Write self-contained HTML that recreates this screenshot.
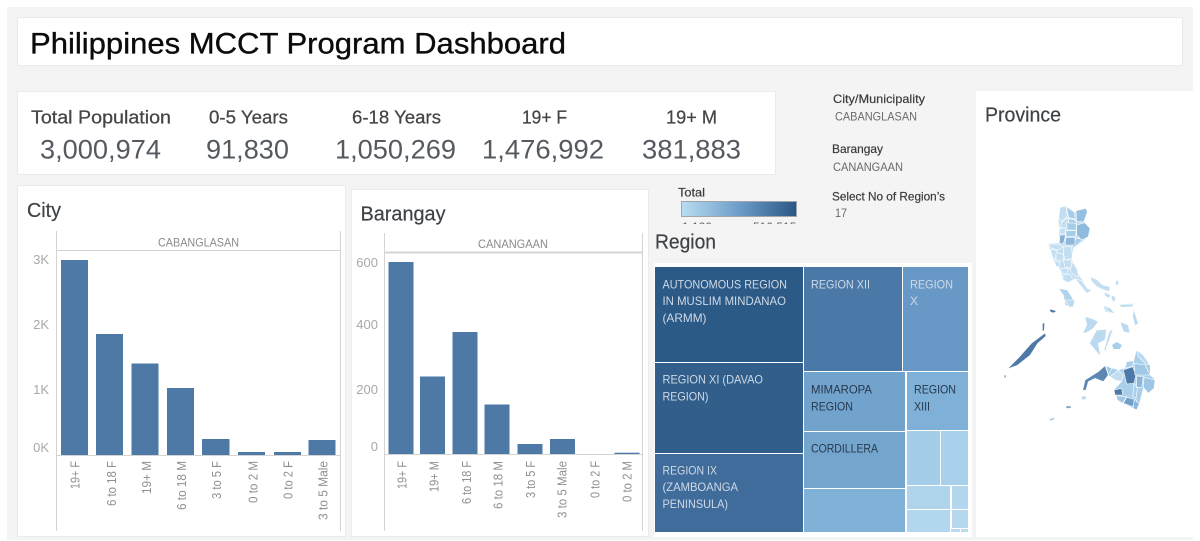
<!DOCTYPE html>
<html lang="en"><head><meta charset="utf-8"><title>Philippines MCCT Program Dashboard</title>
<style>
html,body{margin:0;padding:0;background:#fff;width:1200px;height:541px;overflow:hidden}
svg{display:block;filter:blur(.35px)}
text{font-family:"Liberation Sans",sans-serif}
.lb{font-size:18.5px;fill:#454545;stroke:#454545;stroke-width:.25px}
.nm{font-size:27px;fill:#555a60}
.tt{font-size:20px;fill:#3e4247;stroke:#3e4247;stroke-width:.2px}
.f{font-size:12px;fill:#3c3c3c;stroke:#3c3c3c;stroke-width:.2px}
.v{font-size:12px;fill:#6a6a6a}
.y{font-size:13px;fill:#a8a8a8;text-anchor:end}
.h{font-size:12px;fill:#8a8a8a}
.x{font-size:13px;fill:#8f8f8f;text-anchor:end}
.d{font-size:12px;fill:#ced9e5}
.k{font-size:12px;fill:#26384c}
</style></head><body>
<svg width="1200" height="541" viewBox="0 0 1200 541" xmlns="http://www.w3.org/2000/svg">
<defs>
<linearGradient id="g"><stop offset="0" stop-color="#b9ddf1"/><stop offset=".5" stop-color="#6c9dc8"/><stop offset="1" stop-color="#2a5783"/></linearGradient>
<clipPath id="lc"><rect x="670" y="218" width="140" height="6"/></clipPath>
</defs>
<rect width="1200" height="541" fill="#fff"/>
<rect x="7" y="7" width="1186" height="533" fill="#f4f4f4"/>
<rect x="17.500" y="17.500" width="1165" height="48" fill="#fff" stroke="#ebebeb"/>
<rect x="17.500" y="91.500" width="758" height="83" fill="#fff" stroke="#ebebeb"/>
<rect x="17.500" y="185.500" width="328" height="351" fill="#fff" stroke="#ebebeb"/>
<rect x="351.500" y="189.500" width="297" height="347" fill="#fff" stroke="#ebebeb"/>
<rect x="654" y="263" width="318" height="274" fill="#fff"/>
<rect x="976" y="91" width="218" height="446" fill="#fff"/>

<text x="30" y="53.500" font-size="30" fill="#0b0b0b" stroke="#0b0b0b" stroke-width=".35" textLength="536" lengthAdjust="spacingAndGlyphs">Philippines MCCT Program Dashboard</text>

<text class="lb" x="31" y="123.500" textLength="140" lengthAdjust="spacingAndGlyphs">Total Population</text>
<text class="lb" x="209" y="123.500" textLength="79" lengthAdjust="spacingAndGlyphs">0-5 Years</text>
<text class="lb" x="352" y="123.500" textLength="89" lengthAdjust="spacingAndGlyphs">6-18 Years</text>
<text class="lb" x="522" y="123.500" textLength="45" lengthAdjust="spacingAndGlyphs">19+ F</text>
<text class="lb" x="666" y="123.500" textLength="51" lengthAdjust="spacingAndGlyphs">19+ M</text>
<text class="nm" x="40" y="158.500" textLength="121" lengthAdjust="spacingAndGlyphs">3,000,974</text>
<text class="nm" x="206" y="158.500" textLength="83" lengthAdjust="spacingAndGlyphs">91,830</text>
<text class="nm" x="335" y="158.500" textLength="121" lengthAdjust="spacingAndGlyphs">1,050,269</text>
<text class="nm" x="482" y="158.500" textLength="122" lengthAdjust="spacingAndGlyphs">1,476,992</text>
<text class="nm" x="642" y="158.500" textLength="99" lengthAdjust="spacingAndGlyphs">381,883</text>

<text class="f" x="833" y="103" textLength="92" lengthAdjust="spacingAndGlyphs">City/Municipality</text>
<text class="v" x="835" y="120.500" textLength="82" lengthAdjust="spacingAndGlyphs">CABANGLASAN</text>
<text class="f" x="832" y="153" textLength="51" lengthAdjust="spacingAndGlyphs">Barangay</text>
<text class="v" x="833" y="171" textLength="70" lengthAdjust="spacingAndGlyphs">CANANGAAN</text>
<text class="f" x="832" y="200.500" textLength="113" lengthAdjust="spacingAndGlyphs">Select No of Region’s</text>
<text class="v" x="835" y="217" textLength="12" lengthAdjust="spacingAndGlyphs">17</text>

<text class="f" x="678" y="196.500" textLength="27" lengthAdjust="spacingAndGlyphs">Total</text>
<rect x="681.500" y="201.500" width="115" height="15" fill="url(#g)" stroke="#a0a6ab"/>
<g clip-path="url(#lc)"><text x="682" y="231" font-size="12" fill="#666">1,129</text><text x="753" y="231" font-size="12" fill="#666">510,515</text></g>

<!-- City chart -->
<text class="tt" x="27" y="217" textLength="34" lengthAdjust="spacingAndGlyphs">City</text>
<g stroke="#d4d4d4" fill="none"><path d="M56.500 231V531M340.500 231V531M57 250.500H340M57 455.500H340"/></g>
<text class="h" x="158" y="246.500" textLength="81" lengthAdjust="spacingAndGlyphs">CABANGLASAN</text>
<text class="y" x="49" y="264">3K</text><text class="y" x="49" y="329">2K</text><text class="y" x="49" y="394">1K</text><text class="y" x="49" y="452">0K</text>
<g fill="#4e79a7">
<rect x="61" y="260" width="27" height="195"/><rect x="96" y="334" width="27" height="121"/><rect x="131.500" y="363.500" width="27" height="91.500"/><rect x="167" y="388" width="27" height="67"/><rect x="202" y="439" width="27.500" height="16"/><rect x="238" y="452" width="27" height="3"/><rect x="274" y="452" width="27" height="3"/><rect x="308.500" y="440" width="27" height="15"/>
</g>
<text class="x" transform="translate(79.500,461) rotate(-90)" textLength="28" lengthAdjust="spacingAndGlyphs">19+ F</text>
<text class="x" transform="translate(116,461) rotate(-90)" textLength="45" lengthAdjust="spacingAndGlyphs">6 to 18 F</text>
<text class="x" transform="translate(151,461) rotate(-90)" textLength="33" lengthAdjust="spacingAndGlyphs">19+ M</text>
<text class="x" transform="translate(186,461) rotate(-90)" textLength="49" lengthAdjust="spacingAndGlyphs">6 to 18 M</text>
<text class="x" transform="translate(221,461) rotate(-90)" textLength="38" lengthAdjust="spacingAndGlyphs">3 to 5 F</text>
<text class="x" transform="translate(257.500,461) rotate(-90)" textLength="42" lengthAdjust="spacingAndGlyphs">0 to 2 M</text>
<text class="x" transform="translate(292.500,461) rotate(-90)" textLength="38" lengthAdjust="spacingAndGlyphs">0 to 2 F</text>
<text class="x" transform="translate(327.500,461) rotate(-90)" textLength="59" lengthAdjust="spacingAndGlyphs">3 to 5 Male</text>

<!-- Barangay chart -->
<text class="tt" x="360.500" y="220.500" textLength="85" lengthAdjust="spacingAndGlyphs">Barangay</text>
<g stroke="#d4d4d4" fill="none"><path d="M384.500 233V531M642.500 233V531M385 454.500H642"/><path d="M385 252.500H642" stroke-width="2"/></g>
<text class="h" x="478" y="248" textLength="70" lengthAdjust="spacingAndGlyphs">CANANGAAN</text>
<text class="y" x="378" y="267">600</text><text class="y" x="378" y="329">400</text><text class="y" x="378" y="394">200</text><text class="y" x="378" y="451">0</text>
<g fill="#4e79a7">
<rect x="388.500" y="262" width="25" height="192"/><rect x="420" y="376.500" width="25" height="77.500"/><rect x="452.500" y="332" width="25" height="122"/><rect x="484.500" y="404.500" width="25" height="49.500"/><rect x="517.500" y="444" width="25" height="10"/><rect x="550" y="439" width="25" height="15"/><rect x="614.500" y="452.700" width="25" height="1.300"/>
</g>
<text class="x" transform="translate(406.500,461) rotate(-90)" textLength="28" lengthAdjust="spacingAndGlyphs">19+ F</text>
<text class="x" transform="translate(438.500,461) rotate(-90)" textLength="31" lengthAdjust="spacingAndGlyphs">19+ M</text>
<text class="x" transform="translate(471,461) rotate(-90)" textLength="43" lengthAdjust="spacingAndGlyphs">6 to 18 F</text>
<text class="x" transform="translate(502.500,461) rotate(-90)" textLength="48" lengthAdjust="spacingAndGlyphs">6 to 18 M</text>
<text class="x" transform="translate(535,461) rotate(-90)" textLength="37" lengthAdjust="spacingAndGlyphs">3 to 5 F</text>
<text class="x" transform="translate(566.500,461) rotate(-90)" textLength="57" lengthAdjust="spacingAndGlyphs">3 to 5 Male</text>
<text class="x" transform="translate(599.500,461) rotate(-90)" textLength="37" lengthAdjust="spacingAndGlyphs">0 to 2 F</text>
<text class="x" transform="translate(631.500,461) rotate(-90)" textLength="41" lengthAdjust="spacingAndGlyphs">0 to 2 M</text>

<!-- Region treemap -->
<text class="tt" x="655" y="248.500" textLength="61" lengthAdjust="spacingAndGlyphs">Region</text>
<rect x="655" y="267" width="148" height="95" fill="#2c5a87"/>
<rect x="655" y="363" width="148" height="90" fill="#315e8b"/>
<rect x="655" y="454" width="148" height="78" fill="#3f6c9b"/>
<rect x="804" y="267" width="98" height="104" fill="#4a79a8"/>
<rect x="903" y="267" width="65" height="104" fill="#6898c5"/>
<rect x="804" y="372" width="101" height="59" fill="#72a3cd"/>
<rect x="907" y="372" width="61" height="58" fill="#7fb0d8"/>
<rect x="804" y="432" width="101" height="56" fill="#74a5cc"/>
<rect x="804" y="489" width="101" height="43" fill="#80b1d7"/>
<rect x="907" y="431" width="33" height="54" fill="#a3cde9"/>
<rect x="941" y="431" width="27" height="54" fill="#a8d0eb"/>
<rect x="907" y="486" width="43" height="23" fill="#afd4ec"/>
<rect x="952" y="486" width="16" height="23" fill="#b3d7ee"/>
<rect x="907" y="510" width="43" height="22" fill="#b3d7ee"/>
<rect x="952" y="510" width="16" height="18" fill="#b5d8ef"/>
<rect x="951" y="529" width="9" height="3" fill="#b9dbf0"/>
<rect x="961" y="529" width="7" height="3" fill="#b9dbf0"/>
<text class="d" x="662.500" y="288.500" textLength="124.500" lengthAdjust="spacingAndGlyphs">AUTONOMOUS REGION</text>
<text class="d" x="662.500" y="305" textLength="123.500" lengthAdjust="spacingAndGlyphs">IN MUSLIM MINDANAO</text>
<text class="d" x="662.500" y="322" textLength="44" lengthAdjust="spacingAndGlyphs">(ARMM)</text>
<text class="d" x="662.500" y="383.500" textLength="100.500" lengthAdjust="spacingAndGlyphs">REGION XI (DAVAO</text>
<text class="d" x="662.500" y="400.500" textLength="46" lengthAdjust="spacingAndGlyphs">REGION)</text>
<text class="d" x="662.500" y="474.500" textLength="54.500" lengthAdjust="spacingAndGlyphs">REGION IX</text>
<text class="d" x="662.500" y="491" textLength="75.500" lengthAdjust="spacingAndGlyphs">(ZAMBOANGA</text>
<text class="d" x="662.500" y="508" textLength="65.500" lengthAdjust="spacingAndGlyphs">PENINSULA)</text>
<text class="d" x="811" y="288.500" textLength="59" lengthAdjust="spacingAndGlyphs">REGION XII</text>
<text class="d" x="910" y="288.500" textLength="43" lengthAdjust="spacingAndGlyphs">REGION</text>
<text class="d" x="910" y="305" textLength="8" lengthAdjust="spacingAndGlyphs">X</text>
<text class="k" x="811" y="393.500" textLength="61" lengthAdjust="spacingAndGlyphs">MIMAROPA</text>
<text class="k" x="811" y="410.500" textLength="42" lengthAdjust="spacingAndGlyphs">REGION</text>
<text class="k" x="914" y="393.500" textLength="42" lengthAdjust="spacingAndGlyphs">REGION</text>
<text class="k" x="914" y="410.500" textLength="16" lengthAdjust="spacingAndGlyphs">XIII</text>
<text class="k" x="811" y="452.500" textLength="67" lengthAdjust="spacingAndGlyphs">CORDILLERA</text>

<!-- Province map -->
<text class="tt" x="985" y="121.500" textLength="76" lengthAdjust="spacingAndGlyphs">Province</text>
<g transform="translate(980,180) scale(.33333)" stroke="#fff" stroke-width="1.800" stroke-linejoin="round">
<path fill="#c3def1" stroke="none" d="M240 82L258 78 285 97 318 85 322 95 312 125 330 145 325 170 300 190 280 205 275 235 282 262 300 290 322 325 335 332 320 340 300 315 285 296 262 308 248 298 245 280 237 262 228 258 215 225 205 190 238 190 236 115Z"/>
<g fill="#c3def1">
<path d="M240 82L258 78 262 108 245 125 236 115Z"/>
<path d="M245 128L262 112 266 128 256 145 238 142Z"/>
<path d="M238 145H256L255 162 240 162Z"/>
<path d="M205 190L240 195 250 200 235 210 215 205Z"/>
<path d="M212 208L232 212 225 240 215 225Z"/>
<path d="M228 218L250 222 250 240 228 240Z"/>
<path d="M222 243L240 245 237 262 228 258Z"/>
<path d="M252 198L275 200 277 235 255 240 250 220Z"/>
<path d="M250 240H275L275 265 255 262Z"/>
<path d="M242 265L265 265 262 282 245 280Z"/>
<path d="M278 245L292 268 296 292 280 285 270 270Z"/>
<path d="M250 285L270 282 280 300 262 308 248 298Z"/>
<path d="M285 296L305 302 322 325 335 332 320 340 300 315Z"/>
<path d="M330 290L350 298 368 315 390 320 388 335 372 330 350 320 335 305Z"/>
<path d="M372 335L392 345 388 355 375 348Z"/>
<path d="M408 300L418 305 412 318 406 312Z"/>
<path d="M395 345L408 352 402 368 394 358Z"/>
<path d="M420 372L460 370 458 380 425 382Z"/>
<path d="M370 378L392 385 395 400 375 395Z"/>
</g>
<g fill="#a5cce8">
<path d="M260 80L284 97 285 118 265 112Z"/>
<path d="M267 115L288 122 288 132 266 128Z"/>
<path d="M260 128L288 130 290 150 262 150Z"/>
<path d="M258 152H290L285 170 258 170Z"/>
<path d="M288 175L310 178 280 205 278 195Z"/>
<path d="M235 325L262 330 280 358 276 382 256 376 250 345Z" fill="#b0d3ec"/>
</g>
<path fill="#93bfe0" d="M288 92L318 85 322 95 312 125 290 125Z"/>
<path fill="#8fbbdf" d="M290 135L314 128 330 145 325 170 305 180 290 165Z"/>
<path fill="#86b0d6" d="M240 165L257 165 250 192 238 190Z"/>
<path fill="#8fb8dc" d="M258 172H285L285 195 255 195Z"/>
</g>
<g transform="translate(980,300) scale(.33333)" stroke="#fff" stroke-width="1.800" stroke-linejoin="round">
<path fill="#a9cfea" stroke="none" d="M375 197L396 205 415 210 435 205 440 185 462 182 470 150 490 165 510 195 510 225 525 240 522 265 505 280 490 262 478 310 470 330 440 315 412 300 402 270 425 245 405 240 385 225 370 245 345 235 325 245 318 270 308 272 315 240 355 215Z"/>
<path fill="#bcdaef" d="M315 50L335 55 355 65 340 85 320 98 308 100 320 75Z"/>
<path fill="#bcdaef" d="M350 90L380 88 375 120 355 130 362 170 345 150 328 130Z"/>
<path fill="#bcdaef" d="M400 85L388 120 375 155 372 150 388 95Z"/>
<path fill="#a9cfea" d="M395 135L410 125 427 135 420 148 400 148Z"/>
<path fill="#bcdaef" d="M415 15L460 12 458 20 425 22Z"/>
<path fill="#bcdaef" d="M460 25L475 70 465 78 458 50Z"/>
<path fill="#bcdaef" d="M420 65L445 75 450 100 430 95Z"/>
<path fill="#bcdaef" d="M370 15L392 25 405 42 385 35Z"/>
<path fill="#bcdaef" d="M255 0L285 0 280 20 268 22Z"/>
<path fill="#4e79a7" stroke="none" d="M85 205L120 170 155 130 195 100 197 108 172 130 150 165 112 195Z"/>
<path fill="#4e79a7" stroke="none" d="M188 70L193 70 192 92 188 92Z"/>
<path fill="#4e79a7" stroke="none" d="M210 28L228 33 222 38 212 36Z"/>
<path fill="#7fa3c7" stroke="none" d="M73 226H78V232H73Z"/>
<path fill="#5c87b2" d="M315 240L355 215 375 197 385 225 370 245 345 235 325 245 318 270 308 272Z"/>
<path fill="#9fc6e4" d="M378 197L396 205 385 225Z"/>
<path fill="#c3def1" d="M390 230L415 210 430 225 425 245 405 240Z"/>
<path fill="#4e7aaa" d="M430 210L458 200 468 225 462 250 440 252Z"/>
<path fill="#a0c8e6" d="M462 190L495 195 510 225 465 225Z"/>
<path fill="#a9cfea" d="M440 185L462 182 458 198 435 205Z"/>
<path fill="#bcdaef" d="M470 150L490 165 510 195 498 193 475 170Z"/>
<path fill="#8ab6db" d="M470 228L490 230 485 262 470 262Z"/>
<path fill="#9fc6e4" d="M492 232L525 240 522 265 505 280 490 262Z"/>
<path fill="#4e79a7" d="M402 270L425 265 428 285 405 285Z"/>
<path fill="#a0c8e6" d="M408 287L440 290 428 310 412 300Z"/>
<path fill="#6f9ec8" d="M430 310L440 292 470 300 458 320Z"/>
<path fill="#8ab6db" d="M462 300L478 310 470 330 460 325Z"/>
<path fill="#a9cfea" d="M462 250L472 265 468 295 458 290Z"/>
<path fill="#bcdaef" stroke="none" d="M305 290L318 288 316 298 306 298Z"/>
<path fill="#7fa3c7" stroke="none" d="M258 319L270 318 274 323 260 325Z"/>
<path fill="#a9c6df" stroke="none" d="M208 358L224 353 222 358 212 362Z"/>
</g>
</svg>
</body></html>
